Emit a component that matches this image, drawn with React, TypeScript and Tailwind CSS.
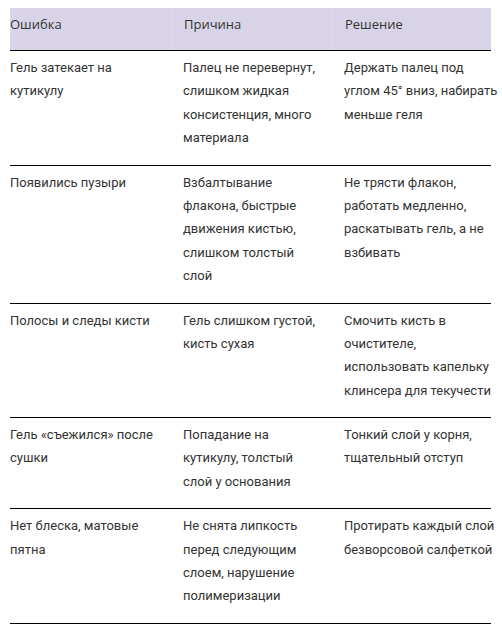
const rows: string[][][] = [
  [
    ["Гель затекает на", "кутикулу"],
    ["Палец не перевернут,", "слишком жидкая", "консистенция, много", "материала"],
    ["Держать палец под", "углом 45° вниз, набирать", "меньше геля"],
  ],
  [
    ["Появились пузыри"],
    ["Взбалтывание", "флакона, быстрые", "движения кистью,", "слишком толстый", "слой"],
    ["Не трясти флакон,", "работать медленно,", "раскатывать гель, а не", "взбивать"],
  ],
  [
    ["Полосы и следы кисти"],
    ["Гель слишком густой,", "кисть сухая"],
    ["Смочить кисть в", "очистителе,", "использовать капельку", "клинсера для текучести"],
  ],
  [
    ["Гель «съежился» после", "сушки"],
    ["Попадание на", "кутикулу, толстый", "слой у основания"],
    ["Тонкий слой у корня,", "тщательный отступ"],
  ],
  [
    ["Нет блеска, матовые", "пятна"],
    ["Не снята липкость", "перед следующим", "слоем, нарушение", "полимеризации"],
    ["Протирать каждый слой", "безворсовой салфеткой"],
  ],
];

const headers = ["Ошибка", "Причина", "Решение"];

function Cell({ lines, first }: { lines: string[]; first: boolean }) {
  return (
    <div className={first ? "pt-[5px] pb-[15px]" : "pt-[5px] pb-[15px] pl-3"}>
      {lines.map((l, i) => (
        <div key={i} className="whitespace-nowrap">
          {l}
        </div>
      ))}
    </div>
  );
}

export default function App() {
  return (
    <div className="min-h-screen bg-white px-[10px] pt-2">
      <div className="w-[481px] text-[13px] leading-[1.8] text-[#333]">
        {/* шапка таблицы */}
        <div
          className="grid grid-cols-[161px_161px_1fr] bg-[#d9d3e8]"
          style={{ fontFamily: '"Open Sans", "Noto Sans", sans-serif' }}
        >
          {headers.map((h, i) => (
            <div
              key={h}
              className={
                i === 0
                  ? "h-[42px] pt-[5px]"
                  : "h-[42px] pt-[5px] pl-3 border-l border-[#e0dbee]"
              }
            >
              {h}
            </div>
          ))}
        </div>

        <div style={{ fontFamily: "Roboto, 'Liberation Sans', sans-serif" }}>
          {rows.map((row, r) => (
            <div
              key={r}
              className="grid grid-cols-[161px_161px_1fr] border-t border-black"
            >
              {row.map((lines, c) => (
                <Cell key={c} lines={lines} first={c === 0} />
              ))}
            </div>
          ))}
          <div className="border-t border-black" />
        </div>
      </div>
    </div>
  );
}
